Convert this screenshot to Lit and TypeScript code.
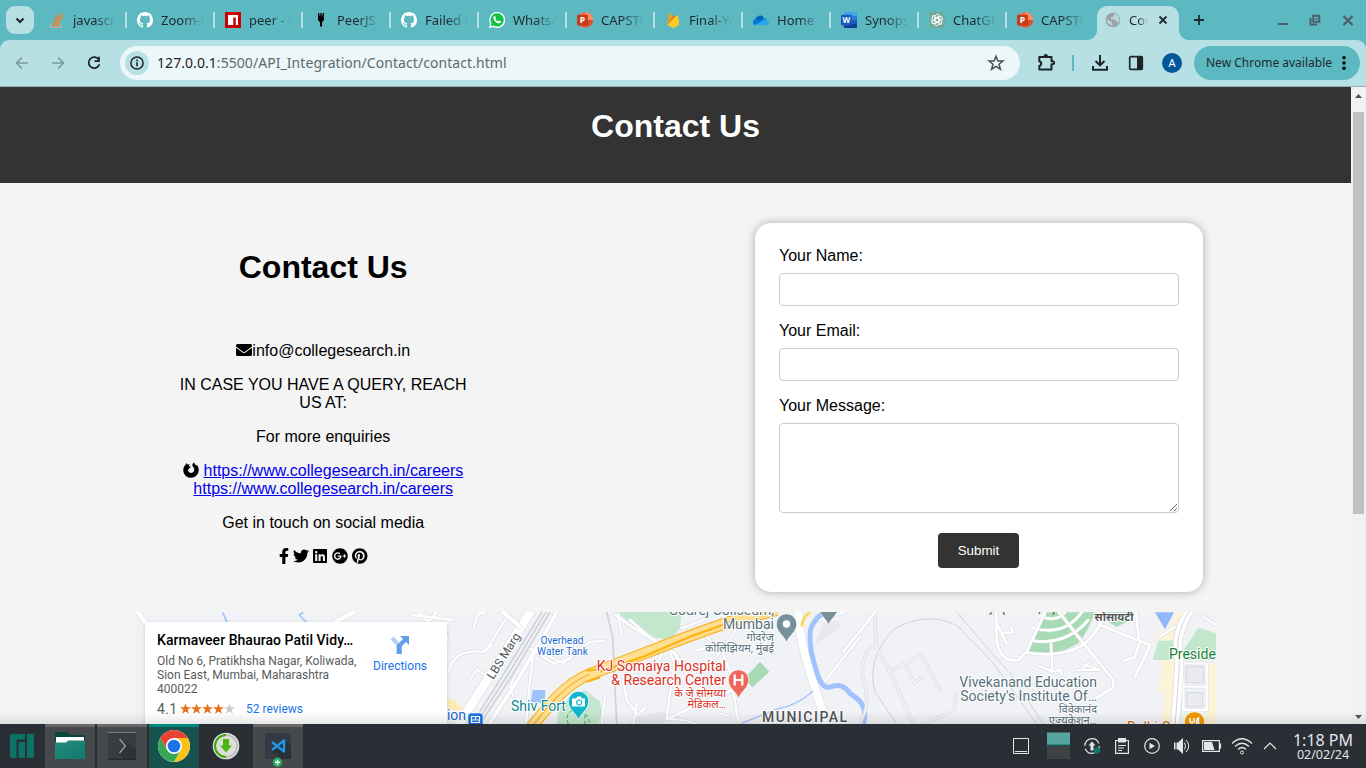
import { LitElement, html, svg, css } from "lit";
import { customElement } from "lit/decorators.js";

const github = svg`<path fill="#fff" d="M8 0C3.58 0 0 3.58 0 8c0 3.54 2.29 6.53 5.47 7.59.4.07.55-.17.55-.38 0-.19-.01-.82-.01-1.49-2.01.37-2.53-.49-2.69-.94-.09-.23-.48-.94-.82-1.13-.28-.15-.68-.52-.01-.53.63-.01 1.08.58 1.23.82.72 1.21 1.87.87 2.33.66.07-.52.28-.87.51-1.07-1.78-.2-3.64-.89-3.64-3.95 0-.87.31-1.59.82-2.15-.08-.2-.36-1.02.08-2.12 0 0 .67-.21 2.2.82.64-.18 1.32-.27 2-.27s1.36.09 2 .27c1.53-1.04 2.2-.82 2.2-.82.44 1.1.16 1.92.08 2.12.51.56.82 1.27.82 2.15 0 3.07-1.87 3.75-3.65 3.95.29.25.54.73.54 1.48 0 1.07-.01 1.93-.01 2.2 0 .21.15.46.55.38A8.01 8.01 0 0 0 16 8c0-4.42-3.58-8-8-8z"/>`;

const powerpoint = svg`
  <circle cx="8.4" cy="8" r="7.9" fill="#ed6c47"/>
  <path d="M8.4.1a7.9 7.9 0 0 1 7.6 7.9H8.4z" fill="#ff8f6b"/>
  <path d="M.6 8h15.7a7.9 7.9 0 0 1-15.7 0z" fill="#d35230"/>
  <rect x="0" y="2.8" width="11" height="10.8" rx="1" fill="#c43e1c"/>
  <text x="5.5" y="11.2" class="glyph" font-size="8.6">P</text>`;

const icons = {
  stack: svg`
    <path d="M1.5 11v4.300h10.500v-4.300" fill="none" stroke="#b9aea6" stroke-width="1.300"/>
    <g stroke="#f48024" stroke-width="1.400" fill="none">
      <path d="M3.500 13.200h6.800M3.600 10.600l6.700.8M4.300 7.900l6.400 2M5.800 5.200l5.600 3.500M8 2.600l4.200 5M11.200.6l1.900 6.200"/>
    </g>`,
  github,
  npm: svg`<rect width="16" height="16" fill="#cb0000"/><path d="M3 3h10v10h-2.200V5.400H8.300V13H3z" fill="#fff"/>`,
  peer: svg`<path d="M5 1h1.300v2.500h1V1h1.400v2.500h1V1H11v3.600L10.200 5.200H11V8L9.700 9.300V10H9v4.500H7V10H6.200V9.300L5 8V5.200h.8L5 4.600z" fill="#000"/>`,
  whatsapp: svg`
    <path d="M0 16l1.200-4.200A8 8 0 1 1 4.200 14.900z" fill="#fff"/>
    <path d="M1.700 14.300l.8-3A6.600 6.600 0 1 1 4.700 13.500z" fill="#10c143"/>
    <path d="M5.200 4.200c.5-.4 1-.2 1.200.3l.5 1.200c.1.400-.3.800-.6 1.200.6 1.200 1.500 2 2.700 2.500.500-.500.700-1 1.200-.9l1.400.7c.5.300.2 1.300-.3 1.700-1 .8-2.400.5-4-.5C5.500 9.100 4.300 7.400 4.300 5.900c0-.7.400-1.300.9-1.700z" fill="#fff"/>`,
  powerpoint,
  firebase: svg`
    <path d="M2 13L4.200.7c.1-.3.400-.3.600 0L7 4.600z" fill="#ffa000"/>
    <path d="M2 13L8.600 3.400c.2-.3.400-.3.600 0l1.200 2.300z" fill="#f57c00"/>
    <path d="M2 13L12.400 3.100c.2-.2.600-.1.700.2L14.300 13 8.800 15.800c-.4.200-.8.200-1.200 0z" fill="#ffca28"/>`,
  onedrive: svg`
    <path d="M2.500 8.200A4.600 4.600 0 0 1 11 5.700l-1 3.300z" fill="#0364b8"/>
    <path d="M0 10.500A3.400 3.400 0 0 1 4.600 7.200l5 3-6.500 2.900C1.200 13.200 0 12 0 10.500z" fill="#0078d4"/>
    <path d="M8.400 9.400l2-3.600c2.800-.1 3.300 1.400 3.400 2.200l-2 2z" fill="#1490df"/>
    <path d="M1.500 12.900L9.500 9l3.300-1.100c2 0 3.200 1.300 3.200 2.800 0 1.400-1 2.500-2.500 2.500H3.500c-.8 0-1.500-.1-2-.3z" fill="#28a8ea"/>`,
  word: svg`
    <rect x="3" y="0" width="13" height="16" rx="1" fill="#2b7cd3"/>
    <path d="M3 0h12q1 0 1 1v3H3z" fill="#41a5ee"/><path d="M3 8h13v4H3z" fill="#185abd"/>
    <path d="M3 12h13v3q0 1-1 1H3z" fill="#103f91"/>
    <rect x="0" y="2.800" width="10.800" height="10.600" rx="1" fill="#185abd"/>
    <text x="5.300" y="11" class="glyph" font-size="8">W</text>`,
  openai: svg`
    <rect width="16" height="16" rx="3" fill="#74aa9c"/>
    <g fill="none" stroke="#fff" stroke-width="1">
      ${[0, 60, 120, 180, 240, 300].map(a => svg`<path transform="rotate(${a} 8 8)" d="M6.200 8.800V4.600c0-2.600 3.800-3 4.500-.5M6.200 6.300l3.600-2"/>`)}
    </g>`,
  globe: svg`
    <circle cx="8" cy="8" r="7.300" fill="#9aa0a6"/>
    <path d="M1.900 6.800l2.500 2.300h2.200v1.700l1 1v1.700C4.500 13.300 2 11 1.900 8zM9 1.900v1.800L7.700 5H6v1.500l-.8.7h3.900l1 1.500h1.400l.9 1.500.7 1.200c2-2.400 1.800-6-.1-8C11.800 2.300 10.500 1.900 9 1.900z" fill="#b7e0e4" opacity=".85"/>`,
};

const tabs: [keyof typeof icons, string][] = [
  ["stack", "javascript"], ["github", "Zoom-Clone"], ["npm", "peer - npm"], ["peer", "PeerJS -"],
  ["github", "Failed to"], ["whatsapp", "WhatsApp"], ["powerpoint", "CAPSTONE"], ["firebase", "Final-Year"],
  ["onedrive", "Home - O"], ["word", "Synopsis"], ["openai", "ChatGPT"], ["powerpoint", "CAPSTONE"],
];

const fa = {
  envelope: [512, "M502.3 190.8c3.9-3.1 9.7-.2 9.7 4.7V400c0 26.5-21.5 48-48 48H48c-26.5 0-48-21.5-48-48V195.6c0-5 5.7-7.8 9.7-4.7 22.4 17.4 52.1 39.5 154.1 113.6 21.1 15.4 56.7 47.8 92.2 47.6 35.7.3 72-32.8 92.3-47.6 102-74.1 131.6-96.3 154-113.7zM256 320c23.2.4 56.6-29.2 73.4-41.4 132.7-96.3 142.8-104.7 173.4-128.7 5.8-4.5 9.2-11.5 9.2-18.9v-19c0-26.5-21.5-48-48-48H48c-26.5 0-48 21.5-48 48v19c0 7.4 3.4 14.3 9.2 18.9 30.6 23.9 40.7 32.4 173.4 128.7 16.8 12.2 50.2 41.8 73.4 41.4z"],
  firefox: [512, "M118 32C122 52 137 72 160 84C180 70 208 62 232 64C206 80 186 104 190 124C205 140 225 144 248 150C246 170 230 182 206 196C198 216 172 216 160 246C162 312 210 350 262 348C330 346 368 290 360 226C352 180 326 150 296 122C298 78 322 30 350 6C358 42 392 76 424 108C438 112 442 102 439 89C482 126 502 190 502 262C497 397 391 500 256 504C118 503 12 397 8 260C10 179 39 122 81 86C91 60 103 43 118 32z"],
  facebook: [320, "M279.14 288l14.22-92.66h-88.91v-60.13c0-25.35 12.42-50.06 52.24-50.06h40.42V6.26S260.43 0 225.36 0c-73.22 0-121.08 44.38-121.08 124.72v70.62H22.89V288h81.39v224h100.17V288z"],
  twitter: [512, "M459.37 151.716c.325 4.548.325 9.097.325 13.645 0 138.72-105.583 298.558-298.558 298.558-59.452 0-114.68-17.219-161.137-47.106 8.447.974 16.568 1.299 25.34 1.299 49.055 0 94.213-16.568 130.274-44.832-46.132-.975-84.792-31.188-98.112-72.772 6.498.974 12.995 1.624 19.818 1.624 9.421 0 18.843-1.3 27.614-3.573-48.081-9.747-84.143-51.98-84.143-102.985v-1.299c13.969 7.797 30.214 12.67 47.431 13.319-28.264-18.843-46.781-51.005-46.781-87.391 0-19.492 5.197-37.36 14.294-52.954 51.655 63.675 129.3 105.258 216.365 109.807-1.624-7.797-2.599-15.918-2.599-24.04 0-57.828 46.782-104.934 104.934-104.934 30.213 0 57.502 12.67 76.67 33.137 23.715-4.548 46.456-13.32 66.599-25.34-7.798 24.366-24.366 44.833-46.132 57.827 21.117-2.273 41.584-8.122 60.426-16.243-14.292 20.791-32.161 39.308-52.628 54.253z"],
  linkedin: [448, "M416 32H31.9C14.3 32 0 46.5 0 64.3v383.4C0 465.5 14.3 480 31.9 480H416c17.6 0 32-14.5 32-32.3V64.3c0-17.8-14.4-32.3-32-32.3zM135.4 416H69V202.2h66.5V416zm-33.2-243c-21.3 0-38.5-17.3-38.5-38.5S80.9 96 102.2 96c21.2 0 38.5 17.3 38.5 38.5 0 21.3-17.2 38.5-38.5 38.5zm282.1 243h-66.4V312c0-24.8-.5-56.7-34.5-56.7-34.6 0-39.9 27-39.9 54.9V416h-66.4V202.2h63.7v29.2h.9c8.9-16.8 30.6-34.5 62.9-34.5 67.2 0 79.7 44.3 79.7 101.9V416z"],
  gplus: [512, "M256 8C119.1 8 8 119.1 8 256s111.1 248 248 248 248-111.1 248-248S392.9 8 256 8zm-70.7 372c-68.8 0-124-55.5-124-124s55.2-124 124-124c31.3 0 60.1 11 83 32.3l-33.6 32.6c-13.2-12.9-31.3-19.1-49.4-19.1-42.9 0-77.2 35.5-77.2 78.1s34.2 78.1 77.2 78.1c32.6 0 64.9-19.1 70.1-53.3h-70.1v-42.6h116.9c1.3 6.8 1.9 13.6 1.9 20.7 0 70.8-47.5 121.2-118.8 121.2zm230.2-106.2v35.5H380v-35.5h-35.5v-35.5H380v-35.5h35.5v35.5h35.2v35.5h-35.2z"],
  pinterest: [496, "M496 256c0 137-111 248-248 248-25.6 0-50.2-3.9-73.4-11.1 10.1-16.5 25.2-43.5 30.8-65 3-11.6 15.4-59 15.4-59 8.1 15.4 31.7 28.5 56.8 28.5 74.8 0 128.7-68.8 128.7-154.3 0-81.9-66.9-143.2-152.9-143.2-107 0-163.9 71.8-163.9 150.1 0 36.4 19.4 81.7 50.3 96.1 4.7 2.2 7.2 1.2 8.3-3.3.8-3.4 5-20.3 6.9-28.1.6-2.5.3-4.7-1.7-7.1-10.1-12.5-18.3-35.3-18.3-56.6 0-54.7 41.4-107.6 112-107.6 60.9 0 103.6 41.5 103.6 100.9 0 67.1-33.9 113.6-78 113.6-24.3 0-42.6-20.1-36.7-44.8 7-29.5 20.5-61.3 20.5-82.6 0-19-10.2-34.9-31.4-34.9-24.9 0-44.9 25.7-44.9 60.2 0 22 7.4 36.8 7.4 36.8s-24.5 103.8-29 123.2c-5 21.4-3 51.6-.9 71.2C65.4 450.9 0 361.1 0 256 0 119 111 8 248 8s248 111 248 248z"],
} as const;

const faIcon = (name: keyof typeof fa) =>
  html`<svg class="fa" height="16" width=${fa[name][0] / 32} viewBox="0 0 ${fa[name][0]} 512"><path d=${fa[name][1]} /></svg>`;

const ic = (size: number, body: unknown) =>
  html`<svg width=${size} height=${size} viewBox="0 0 ${size} ${size}">${body}</svg>`;

@customElement("city-map")
class CityMap extends LitElement {
  static styles = css`
    :host { display: block; position: relative; height: 112px; overflow: hidden; font-family: Roboto, "Noto Sans", sans-serif; }
    .canvas { display: block; }
    .case { fill: none; stroke: #dcdfe4; stroke-linecap: round; stroke-linejoin: round; }
    .road { fill: none; stroke: #fff; stroke-linecap: round; stroke-linejoin: round; }
    .lane { fill: none; stroke: #f4f5f7; stroke-linecap: round; stroke-linejoin: round; }
    .rail { fill: none; stroke: #d0d2d6; stroke-linejoin: round; }
    .water { fill: none; stroke: #a0c3ff; stroke-linejoin: round; }
    text { font-size: 14px; paint-order: stroke; stroke: #fff; stroke-width: 2px; stroke-linejoin: round; }
    .end { text-anchor: end; }
    .mid { text-anchor: middle; }
    .hi { font-size: 11px; }
    .ten { font-size: 10.2px; }
    .twelve { font-size: 12px; }
    .slate { fill: #56707c; }
    .red { fill: #d93025; }
    .blue { fill: #1967d2; }
    .teal { fill: #12868f; }
    .gray { fill: #505458; }
    .green { fill: #188038; }
    .orange { fill: #d56e0c; }
    .place { position: absolute; left: 10px; top: 10px; width: 302px; height: 110px; box-sizing: border-box; padding: 10px 0 0 12px; display: flex; background: #fff; border-radius: 2px; box-shadow: 0 1px 4px -1px rgba(0,0,0,.3); font-size: 12px; line-height: 14px; color: #5b5b5b; }
    .info { width: 204px; flex: none; }
    .name { font-size: 14px; font-weight: 500; color: #000; line-height: 16px; margin-bottom: 6px; white-space: nowrap; letter-spacing: .04px; }
    .rating { display: flex; align-items: center; margin-top: 5px; height: 16px; }
    .score { font-size: 14px; width: 23px; letter-spacing: .3px; }
    .link { color: #1a73e8; }
    .reviews { margin-left: 11px; }
    .dir { width: 78px; flex: none; display: flex; flex-direction: column; align-items: center; gap: 4px; padding-top: 3px; }
  `;

  render() {
    const left = [
      ["M20 30L50 75", 13], ["M615 66L670 37", 13], ["M850 45L970 60M865 37L895 65M895 65L920 37", 7],
      ["M1030 85L1045 40L1068 40", 7], ["M955 215C970 160 1010 150 1060 155L1085 135", 7],
      ["M1020 240L1040 208L1065 225", 6], ["M945 90L955 130", 6],
      ["M1065 155L1140 37", 7], ["M985 375L1205 30", 26],
    ];
    const centre = [
      ["M20 20L90 80", 12], ["M200 36L160 110L70 260L-20 400", 10],
      ["M210 110L260 130L240 175M160 160L220 190L300 125L345 122M250 150L285 95", 6],
      ["M120 145L190 190L240 175M130 160L120 240L108 372", 7],
      ["M75 225L60 260L70 290", 6],
      ["M375 45L440 90L500 125L555 160L590 220", 8], ["M575 85L640 60M420 60L500 130", 7],
      ["M400 240L410 300L440 340M440 310L430 372M520 150L500 200", 7], ["M540 160L555 190L540 280L530 355L590 362L620 372", 7],
      ["M530 358L610 320L750 260L765 240M620 150L690 140L720 215L745 365M650 110L690 150", 7],
      ["M345 290L335 372", 6], ["M690 340L720 350", 6], ["M385 40L395 110", 6],
      ["M925 35C925 120 960 220 1010 372", 24], ["M1000 250L1110 110M985 60L1060 37", 7],
      ["M460 325L440 350L470 320", 5], ["M680 170L760 60", 5],
    ];
    const right = [
      ["M-20 155L75 37", 8], ["M530 158C640 175 720 150 755 60L750 37", 8],
      ["M438 37L440 120C450 180 480 185 505 180L530 155L585 37M440 70L470 130M462 98L490 98L482 80M400 50L403 40", 8],
      ["M628 37L700 130L790 240L790 262L730 300", 8], ["M603 130L607 215L560 195M607 215L635 210L635 225", 7],
      ["M690 190L750 210L680 210M700 205L720 185", 6], ["M750 75L900 135L885 170L855 230M858 37L868 130L855 170L820 183", 8],
      ["M505 230L560 270", 6], ["M930 110L975 80M1060 50L1100 75", 7], ["M1000 180L1000 330L1070 330L1070 190L1000 190M1000 260L1070 260", 7],
    ];
    const faint = "M75 40L78 140L120 215L190 372M78 142C50 130 30 190 40 240C60 290 50 330 30 372M115 215L215 165L270 270M165 190L192 250L215 232M320 280L312 330L225 372";
    const draw = (list: (string | number)[][]) => svg`
      ${list.map(([d, w]) => svg`<path class="case" d=${d} stroke-width=${(w as number) + 4}/>`)}
      ${list.map(([d, w]) => svg`<path class="road" d=${d} stroke-width=${w}/>`)}`;
    const pin = (x: number, y: number, c: string, inner: unknown) => svg`
      <g transform="translate(${x} ${y})">
        <path d="M0 18.500C-2 12-10.300 8-10.300 0A10.300 10.300 0 0 1 10.300 0C10.300 8 2 12 0 18.500z" fill=${c} stroke="#fff" stroke-width=".8"/>${inner}
      </g>`;

    return html`
      <svg class="canvas" width="1081" height="112" viewBox="135 612 1081 112">
        <rect x="135" y="612" width="1081" height="112" fill="#f1f2f5"/>
        <g transform="translate(850 600) scale(.33333)">
          <path fill="#fdf3d6" d="M985 36L1010 36L980 110L990 372L935 372L945 280L928 275L945 100zM1070 200L1100 190V372H1060L1080 300zM915 105l20-10 10 15-20 15z"/>
          <path fill="#c3e7cd" d="M925 122H975L962 180H908zM1000 150L1045 83L1100 100V180H1000z"/>
          <path fill="#a8dab5" d="M585 37H735L715 85L690 125C650 155 600 165 530 157zM755 37H842L832 65L800 80L765 60z"/>
          <path class="road" stroke-width="9" d="M540 120C600 135 670 115 715 60M552 85C610 100 660 85 695 37M570 50C610 62 630 55 645 37"/>
        </g>
        <g transform="translate(490 600) scale(.33333)">
          <path fill="#c3e7cd" d="M375 36H575L570 85L540 122L495 112zM205 325L245 290L285 270L330 305L337 345L325 372H200z"/>
          <path fill="#a8dab5" d="M762 237L810 185L838 215L788 262z"/>
          <path fill="#9fc3fc" d="M128 270H166L164 308H122z"/>
          <path fill="#e7e9ed" d="M1000 70L1045 60L1055 80L970 140zM430 355L530 330L520 372H420z"/>
        </g>
        <g transform="translate(130 600) scale(.33333)">
          <path fill="#fdeab8" d="M950 295L975 300L1000 330L950 330z"/>
          ${draw(left)}
          <path class="water" stroke-width="5" d="M278 37L292 70M520 37L508 45L532 70"/>
        </g>
        <g transform="translate(490 600) scale(.33333)">
          <path class="rail" stroke-width="5" d="M350 36L368 110L380 372"/>
          ${draw(centre)}
          <path class="rail" stroke-width="5" d="M156 36L42 220L-54 372M168 36L55 222L-42 372M180 36L67 225L-30 372"/>
          <path class="water" stroke-width="15" d="M1003 36C955 70 955 100 965 160C980 220 990 262 1015 262C1040 255 1060 250 1080 280C1110 300 1135 320 1120 372"/>
          <path class="water" stroke-width="4" d="M970 272C940 300 900 320 860 327L755 370"/>
          <path d="M935 80Q938 50 960 37" fill="none" stroke="#fdd663" stroke-width="9"/>
          <path d="M118 390C180 310 230 250 300 222C420 180 580 110 720 66L860 30" fill="none" stroke="#f9b22a" stroke-width="36"/>
          <path d="M118 390C180 310 230 250 300 222C420 180 580 110 720 66L860 30" fill="none" stroke="#ffe092" stroke-width="29"/>
          <path d="M118 390C180 310 230 250 300 222" fill="none" stroke="#f9b22a" stroke-width="4"/>
          <path d="M290 212L320 208M290 245L330 232M330 215L460 170L600 110L740 60" fill="none" stroke="#fcb419" stroke-width="7"/>
          <path d="M235 372C215 320 290 310 300 372M285 345V372" fill="none" stroke="#49a76a" stroke-width="3" stroke-dasharray="11 7"/>
        </g>
        <g transform="translate(850 600) scale(.33333)">
          <path class="rail" stroke-width="3" d="M140 372L75 275C50 190 100 120 130 90C190 50 290 40 340 95L430 190L560 372M320 36L400 130L480 220L580 372"/>
          <path class="case" stroke-width="10" d=${faint}/><path class="lane" stroke-width="4.500" d=${faint}/>
          ${draw(right)}
          <path class="case" stroke-width="30" d="M1020 30C970 110 985 150 988 200L975 380"/>
          <path class="road" stroke-width="25" d="M1020 30C970 110 985 150 988 200L975 380"/>
          <path class="rail" stroke-width="3" d="M1020 30C970 110 985 150 988 200L975 380"/>
          <path fill="#e9ebee" stroke="#d5d8dc" stroke-width="3" d="M1008 200h52v48h-52zM1010 278h48v42h-48z"/>
          <path fill="#8fb7fa" d="M915 37H972L945 88z"/>
          <path d="M426 37q-3 5-8 5M462 36q-4 5 3 8M570 36q-2 5-4 6M612 36q0 6-4 8" fill="none" stroke="#5b7480" stroke-width="4"/>
        </g>

        <text class="mid blue ten" x="562" y="643.500">Overhead</text>
        <text class="mid blue ten" x="562.500" y="654.500">Water Tank</text>
        <text class="mid gray twelve" transform="translate(507 658) rotate(-58)">LBS Marg</text>
        <text class="end slate" x="774" y="615">Godrej Coliseum,</text>
        <text class="end slate" x="774" y="629">Mumbai</text>
        <text class="end slate hi" x="774" y="640.500">गोदरेज</text>
        <text class="end slate hi" x="774" y="651.500">कोलिझियम, मुंबई</text>
        <text class="end red" x="726" y="671">KJ Somaiya Hospital</text>
        <text class="end red" x="726" y="685">&amp; Research Center</text>
        <text class="end red hi" x="726" y="696.500">के जे सोमय्या</text>
        <text class="end red hi" x="726" y="708">मेडिकल…</text>
        <text class="teal" x="511" y="711">Shiv Fort</text>
        <text class="gray" x="762" y="722" font-weight="500" letter-spacing="1.500">MUNICIPAL</text>
        <text class="end blue" x="466" y="719.500">Sion</text>
        <text class="end slate" x="1097" y="687">Vivekanand Education</text>
        <text class="end slate" x="1097" y="701">Society's Institute Of…</text>
        <text class="end slate hi" x="1097" y="712.500">विवेकानंद</text>
        <text class="end slate hi" x="1097" y="724">एज्यकेशन…</text>
        <text class="mid gray hi" x="1114" y="620.500" font-weight="700">सोसायटी</text>
        <text class="green" x="1169" y="659">President</text>
        <text class="orange" x="1127" y="732">Delhi C</text>

        ${pin(786.500, 624, "#78909c", svg`<circle r="3.700" fill="#fff"/>`)}
        ${pin(828.500, 606.500, "#78909c", "")}
        ${pin(738.500, 680, "#ee675c", svg`<path d="M-3.800-5.500V5.500M3.800-5.500V5.500M-3.800 0H3.800" stroke="#fff" stroke-width="2.200"/>`)}
        ${pin(578.500, 701.500, "#12b5cb", svg`<path d="M-6.500-3H-2.500L-1-5H2.500L3.500-3H6.500V5H-6.500z" fill="#fff"/><circle cx=".7" cy="1" r="2.500" fill="none" stroke="#12b5cb" stroke-width="1.200"/>`)}
        ${pin(1194.500, 722, "#f29900", svg`<path d="M-4.500-4V0H-.5V-4M-2.500 0V5M4 5V-4Q1.500-3 2 1H4" fill="none" stroke="#fff" stroke-width="1.600"/>`)}
        <rect x="468" y="713" width="15" height="14" rx="3" fill="#1a73e8" stroke="#fff" stroke-width=".6"/>
        <path d="M471.500 716.500h8v6h-8zM475.500 716.500v3.500M471.500 720h8" fill="none" stroke="#fff" stroke-width="1.200"/>
      </svg>
      <div class="place">
        <div class="info">
          <div class="name">Karmaveer Bhaurao Patil Vidy…</div>
          <div>Old No 6, Pratikhsha Nagar, Koliwada,<br />Sion East, Mumbai, Maharashtra<br />400022</div>
          <div class="rating">
            <span class="score">4.1</span>
            <svg width="55" height="12" viewBox="0 0 55 12">
              ${[0, 1, 2, 3, 4].map(i => svg`<path transform="translate(${i * 11} 0)" fill=${i < 4 ? "#e7711b" : "#ccc"} d="M5.500.4L6.900 4.300H11L7.700 6.800L8.900 10.800L5.500 8.400L2.100 10.800L3.300 6.800L0 4.300H4.100z"/>`)}
            </svg>
            <span class="link reviews">52 reviews</span>
          </div>
        </div>
        <div class="dir">
          <svg width="22" height="20" viewBox="0 0 22 20">
            <path d="M1.500 4.500L4.500 1.500L11.500 9L9 12z" fill="#b5d0f8"/>
            <path d="M11 1H20V10L17 7L12.800 11.200V19H7.600V10.500L14 4z" fill="#619fe8"/>
          </svg>
          <span class="link">Directions</span>
        </div>
      </div>`;
  }
}

@customElement("app-root")
class AppRoot extends LitElement {
  static styles = css`
    :host { display: flex; flex-direction: column; width: 1366px; height: 768px; overflow: hidden; font-family: "Noto Sans", sans-serif; background: #5cb8c1; }
    * { box-sizing: border-box; }
    svg { display: block; flex: none; }
    .glyph { fill: #fff; font-family: "Open Sans", sans-serif; font-weight: 700; text-anchor: middle; }

    .tabstrip { height: 40px; display: flex; align-items: center; color: #1f2a2c; font-size: 13px; }
    .search { width: 28px; height: 28px; margin: 0 5px 0 6px; border-radius: 9px; background: #b7e0e4; display: grid; place-items: center; }
    .tab { width: 88px; height: 16px; padding-left: 10px; display: flex; align-items: center; gap: 8px; border-right: 2px solid #b7e0e4; }
    .tab.last { border-color: transparent; }
    .title { width: 43px; overflow: hidden; white-space: nowrap; line-height: 20px; mask-image: linear-gradient(90deg, #000 50%, transparent); }
    .active { position: relative; width: 82px; height: 34px; margin: 6px 0 0 2px; padding: 0 0 6px 8px; border-radius: 10px 10px 0 0; background: #b7e0e4; display: flex; align-items: center; gap: 8px; }
    .active::before, .active::after { content: ""; position: absolute; bottom: 0; width: 10px; height: 10px; }
    .active::before { left: -10px; background: radial-gradient(circle at 0 0, transparent 9.5px, #b7e0e4 10.5px); }
    .active::after { right: -10px; background: radial-gradient(circle at 100% 0, transparent 9.5px, #b7e0e4 10.5px); }
    .active .title { width: 19px; }
    .close { margin-left: 1px; }
    .plus { margin-left: 12px; }
    .wins { display: flex; gap: 16px; margin-left: auto; padding-right: 10px; }

    .toolbar { height: 47px; padding: 0 6px 1px 4px; display: flex; align-items: center; background: #b7e0e4; border-bottom: 1px solid #8fb1b5; border-radius: 9px 9px 0 0; }
    .btn { width: 36px; height: 36px; display: grid; place-items: center; }
    .omni { width: 900px; height: 34px; margin: 0 8px; padding: 0 15px 0 5px; border-radius: 17px; background: #ebf7f8; display: flex; align-items: center; font-size: 14px; letter-spacing: .06px; color: #5f6a6c; }
    .host { color: #1f2224; }
    .site { width: 24px; height: 24px; border-radius: 50%; background: #b7e0e4; display: grid; place-items: center; margin-right: 8px; }
    .star { margin-left: auto; }
    .bar { width: 2px; height: 16px; margin: 0 8px; background: #5cb8c1; }
    .avatar { width: 20px; height: 20px; border-radius: 50%; background: #00579c; color: #fff; font-size: 11px; line-height: 20px; text-align: center; }
    .pill { width: 166px; height: 34px; margin-left: 4px; padding: 0 10px 0 12px; border-radius: 17px; background: #5cb8c1; display: flex; align-items: center; justify-content: space-between; font-size: 12px; color: #1f2a2c; white-space: nowrap; }

    .view { height: 637px; display: flex; }
    .page { width: 1351px; height: 637px; overflow: hidden; background: #f4f4f4; color: #000; font: 16px "Liberation Sans", Arial, sans-serif; line-height: 18px; }
    .banner { height: 96px; padding-top: 21px; background: #333; color: #fff; text-align: center; }
    h1 { margin: 0; font-size: 32px; line-height: 37px; }
    .cols { display: flex; align-items: flex-start; padding: 40px 0 0 173px; }
    .contact { width: 300.4px; padding-top: 26px; text-align: center; }
    .contact h1 { margin-bottom: 56px; }
    .contact p { margin: 0 0 16px; }
    .contact a { color: #0000ee; text-decoration: underline; }
    .fa { display: inline-block; vertical-align: -2px; fill: #000; }
    .card { width: 448px; height: 369px; margin-left: 281.6px; padding: 24px; border-radius: 16px; background: #fff; box-shadow: 0 0 10px rgba(0,0,0,.3); display: flex; flex-direction: column; }
    label { margin-bottom: 8px; }
    input, textarea { margin: 0 0 16px; padding: 8px; width: 400px; border: 1px solid #ccc; border-radius: 4px; background: #fff; outline: none; }
    input { height: 33px; }
    textarea { height: 90px; margin-bottom: 20px; }
    .submit { width: 81px; height: 35px; padding: 0; margin-right: 1px; align-self: center; border: 0; border-radius: 4px; background: #333; color: #fff; font: 13.333px "Liberation Sans", Arial, sans-serif; }
    city-map { width: 1081px; margin: 20px 0 0 135px; }
    .scroll { width: 15px; display: flex; flex-direction: column; align-items: center; background: #f1f1f1; padding: 7px 0 5px; }
    .thumb { width: 11px; height: 402px; margin: 14px 0 auto; background: #c1c1c1; }

    .panel { position: relative; height: 44px; display: flex; background: #2a2e35; color: #e4e6e8; }
    .panel::before { content: ""; position: absolute; left: 0; right: 0; bottom: 100%; height: 12px; background: linear-gradient(transparent, rgba(0,0,0,.09)); }
    .menu { width: 45px; display: grid; place-items: center; padding-right: 1px; }
    .task { width: 50px; margin-right: 2px; border-top: 3px solid transparent; display: flex; justify-content: center; }
    .open { background: #45494c; border-color: #66696c; }
    .current { background: #17524f; border-color: #00887a; }
    .tray { display: flex; margin-left: auto; }
    .cell { width: 30px; display: grid; place-items: center; }
    .cell.wide { width: 23px; margin: 0 7px 0 11px; }
    .cell.slim { width: 26px; }
    .clock { width: 80px; margin-right: 3px; padding-top: 7px; display: flex; flex-direction: column; align-items: center; font-size: 16px; line-height: 18px; }
    .date { font-size: 12.5px; line-height: 12px; }
  `;

  render() {
    return html`
      <div class="tabstrip">
        <div class="search">${ic(12, svg`<path d="M2.500 4.500L6 8L9.500 4.500" fill="none" stroke="#1b2426" stroke-width="2"/>`)}</div>
        ${tabs.map(([i, t], n) => html`<div class="tab ${n === 11 ? "last" : ""}">${ic(16, icons[i])}<span class="title">${t}</span></div>`)}
        <div class="active">${ic(16, icons.globe)}<span class="title">Con</span>
          <span class="close">${ic(12, svg`<path d="M2.500 2.500L9.500 9.500M9.500 2.500L2.500 9.500" stroke="#1f2a2c" stroke-width="1.800"/>`)}</span>
        </div>
        <div class="plus">${ic(16, svg`<path d="M8 3V13M3 8H13" stroke="#1f2a2c" stroke-width="1.800"/>`)}</div>
        <div class="wins">
          ${ic(16, svg`<path d="M3 12H13" stroke="#4a6065" stroke-width="2"/>`)}
          ${ic(16, svg`<path d="M6.200 3.700H12.300V9.800H6.200zM3.500 6V12.500H10" fill="none" stroke="#4a6065" stroke-width="1.900"/><path d="M8.500 6h2v1.700h-2z" fill="#4a6065"/>`)}
          ${ic(17, svg`<path d="M4.500 4L13.500 13M13.500 4L4.500 13" stroke="#4a6065" stroke-width="2.300"/>`)}
        </div>
      </div>

      <div class="toolbar">
        <div class="btn">${ic(16, svg`<path d="M14 8H3M8 2.500L2.500 8L8 13.500" fill="none" stroke="#7d9a9e" stroke-width="1.700"/>`)}</div>
        <div class="btn">${ic(16, svg`<path d="M2 8H13M8 2.500L13.500 8L8 13.500" fill="none" stroke="#7d9a9e" stroke-width="1.700"/>`)}</div>
        <div class="btn">${ic(16, svg`<path d="M13 5A5.500 5.500 0 1 0 13.400 9.300" fill="none" stroke="#1f2426" stroke-width="1.800"/><path d="M13.800 1.800V7H8.600V5.200H12V1.800z" fill="#1f2426"/>`)}</div>
        <div class="omni">
          <span class="site">${ic(16, svg`<circle cx="8" cy="8" r="6.100" fill="none" stroke="#1f2426" stroke-width="1.500"/><path d="M8 7.300V11.300M8 4.600V6.200" stroke="#1f2426" stroke-width="1.600"/>`)}</span>
          <span><span class="host">127.0.0.1</span>:5500/API_Integration/Contact/contact.html</span>
          <span class="star">${ic(18, svg`<path d="M9 2.200L10.900 7H15.900L12 10.200L13.400 15.200L9 12.300L4.600 15.200L6 10.200L2.100 7H7.100z" fill="none" stroke="#4b5254" stroke-width="1.500"/>`)}</span>
        </div>
        <div class="btn">${ic(20, svg`<path d="M4 4H15.500V8.300H16.600A1.500 1.500 0 0 1 16.600 11.300H15.500V16.500H3.300V12.900A2.400 2.400 0 0 0 3.300 8.200V4z" fill="none" stroke="#1f2426" stroke-width="2" stroke-linejoin="round"/><path d="M7.600 3.300a2.200 2.200 0 0 1 4.400 0z" fill="#1f2426"/>`)}</div>
        <div class="bar"></div>
        <div class="btn">${ic(20, svg`<path d="M10 2V12M5.500 8L10 12.300L14.500 8M3 13V16.800H17V13" fill="none" stroke="#1f2426" stroke-width="2"/>`)}</div>
        <div class="btn">${ic(18, svg`<rect x="2.700" y="2.700" width="12.600" height="12.600" rx="1" fill="none" stroke="#1f2426" stroke-width="1.700"/><path d="M10 2.500H15.500V15.500H10z" fill="#1f2426"/>`)}</div>
        <div class="btn"><div class="avatar">A</div></div>
        <div class="pill">New Chrome available
          <svg width="12" height="16" viewBox="0 0 12 16"><circle cx="6" cy="2.800" r="1.700"/><circle cx="6" cy="8" r="1.700"/><circle cx="6" cy="13.200" r="1.700"/></svg>
        </div>
      </div>

      <div class="view">
        <div class="page">
          <div class="banner"><h1>Contact Us</h1></div>
          <div class="cols">
            <div class="contact">
              <h1>Contact Us</h1>
              <p>${faIcon("envelope")}info@collegesearch.in</p>
              <p>IN CASE YOU HAVE A QUERY, REACH US AT:</p>
              <p>For more enquiries</p>
              <p>${faIcon("firefox")} <a>https://www.collegesearch.in/careers</a> <a>https://www.collegesearch.in/careers</a></p>
              <p>Get in touch on social media</p>
              <p>${faIcon("facebook")} ${faIcon("twitter")} ${faIcon("linkedin")} ${faIcon("gplus")} ${faIcon("pinterest")}</p>
            </div>
            <form class="card">
              <label>Your Name:</label><input />
              <label>Your Email:</label><input />
              <label>Your Message:</label><textarea></textarea>
              <button class="submit" type="button">Submit</button>
            </form>
          </div>
          <city-map></city-map>
        </div>
        <div class="scroll">
          <svg width="7" height="4" viewBox="0 0 7 4"><path d="M0 4L3.500 0L7 4z" fill="#505050"/></svg>
          <div class="thumb"></div>
          <svg width="7" height="4" viewBox="0 0 7 4"><path d="M0 0H7L3.500 4z" fill="#505050"/></svg>
        </div>
      </div>

      <div class="panel">
        <div class="menu">${ic(24, svg`<path d="M2 0H15V5.500H6.500V24H2Q0 24 0 22V2Q0 0 2 0zM8.500 8H15V24H8.500zM17 0H24V22Q24 24 22 24H17z" fill="#0b7266"/>`)}</div>
        <div class="task open">
          <svg width="32" height="38" viewBox="0 0 32 38">
            <defs><linearGradient id="f" x1="0" y1="0" x2="1" y2="1"><stop offset="0" stop-color="#2b8b80"/><stop offset="1" stop-color="#0b7a6c"/></linearGradient></defs>
            <path d="M1 5H14L16 8H31V32H1z" fill="#07473f"/><path d="M2 10H30V16H2z" fill="#fff"/><path d="M1 15.500H12L14 13.500H31V32H1z" fill="url(#f)"/>
          </svg>
        </div>
        <div class="task open">
          <svg width="28" height="38" viewBox="0 0 28 38"><path d="M0 5H28V32H0z" fill="#383d3f"/><path d="M11 12L18 19L11 26L17 32H28V22z" fill="#2f3335"/><path d="M0 5.500H28" stroke="#7b7f81"/><path d="M0 32.300H28" stroke="#1f2224"/><path d="M11.500 12L17.500 19L11.500 26" fill="none" stroke="#9b9fa1" stroke-width="1.300"/></svg>
        </div>
        <div class="task current">
          <svg width="32" height="38" viewBox="0 0 32 38">
            <circle cx="16" cy="19" r="16" fill="#fff"/>
            <path d="M2.144 11A16 16 0 0 1 29.856 11H16L9.072 23z" fill="#ea4335"/>
            <path d="M16 35A16 16 0 0 1 2.144 11L9.072 23H22.928z" fill="#34a853"/>
            <path d="M29.856 11A16 16 0 0 1 16 35L22.928 23L16 11z" fill="#fbc117"/>
            <circle cx="16" cy="19" r="8" fill="#fff"/><circle cx="16" cy="19" r="6.300" fill="#1a73e8"/>
          </svg>
        </div>
        <div class="task">
          <svg width="28" height="38" viewBox="0 0 28 38"><circle cx="14" cy="19" r="13.300" fill="#dcdedc"/><circle cx="14" cy="19" r="11" fill="none" stroke="#b5b8b5" stroke-width="1.500"/><path d="M14 30A11 11 0 0 1 14 8" fill="none" stroke="#43a80c" stroke-width="2"/><path d="M11 12H17V18.500H20L14 25.500L8 18.500H11z" fill="#4fb512"/></svg>
        </div>
        <div class="task open">
          <svg width="28" height="40" viewBox="0 0 28 40"><rect x="1" y="6" width="26" height="26" rx="1" fill="#343a44"/><path d="M20 12L27 19V32H18L8 24z" fill="#2b3038"/><path d="M20 12.500V25.500M20 13.500L8 23M20 24.500L8 15" fill="none" stroke="#2196e3" stroke-width="2.400"/><circle cx="13.500" cy="35.300" r="4.700" fill="#27ae60"/><path d="M13.500 32.800V37.800M11 35.300H16" stroke="#fff" stroke-width="1.400"/></svg>
        </div>
        <div class="tray">
          <div class="cell">${ic(16, svg`<path d="M.5.5H15.500V15.500H.5zM2 13.500H14" fill="none" stroke="#e4e6e8"/>`)}</div>
          <div class="cell wide"><svg width="23" height="28" viewBox="0 0 23 28"><path d="M0 .5H23V13H0z" fill="#56a69f"/><path d="M0 13H23" stroke="#0b7266"/><path d="M0 14H23V27H0z" fill="#3e4244"/></svg></div>
          <div class="cell">${ic(18, svg`<circle cx="9" cy="9" r="7.300" fill="none" stroke="#dfe1e3" stroke-width="1.200" stroke-dasharray="20 3"/><path d="M9 4.500L12.500 8.500H10.500V13.500H7.500V8.500H5.500z" fill="#e4e6e8"/><circle cx="14" cy="13.500" r="3.200" fill="#087a6a"/>`)}</div>
          <div class="cell">${ic(16, svg`<path d="M1.600 2.500H14.400V15.400H1.600z" fill="none" stroke="#e4e6e8" stroke-width="1.200"/><path d="M4 0H12V4.500H4z" fill="#e4e6e8"/><path d="M4 7.500H12M4 10H10M4 12.500H8" stroke="#e4e6e8"/>`)}</div>
          <div class="cell">${ic(16, svg`<circle cx="8" cy="8" r="7.300" fill="none" stroke="#e4e6e8" stroke-width="1.200"/><path d="M5.500 4.800L11 8L5.500 11.200z" fill="#e4e6e8"/>`)}</div>
          <div class="cell">${ic(16, svg`<path d="M0 4.500H1.500V11.500H0zM2.500 4.500H4L9 0V16L4 11.500H2.500z" fill="#e4e6e8"/><path d="M10.500 4.500Q12.500 8 10.500 11.500M12 2Q17.500 8 12 14" fill="none" stroke="#e4e6e8"/>`)}</div>
          <div class="cell"><svg width="20" height="12" viewBox="0 0 20 12"><path d="M.6.6H17.400V11.400H.6zM18.500 3.500V8.500" fill="none" stroke="#e4e6e8" stroke-width="1.200"/><path d="M2 2H10L12.500 10H2z" fill="#e4e6e8"/></svg></div>
          <div class="cell"><svg width="22" height="18" viewBox="0 0 22 18"><path d="M1 6.500Q11-3 21 6.500M4 9.500Q11 3 18 9.500M7 12.500Q11 8.500 15 12.500" fill="none" stroke="#e4e6e8" stroke-width="1.200"/><circle cx="11" cy="15.500" r="1.500" fill="none" stroke="#e4e6e8"/></svg></div>
          <div class="cell slim"><svg width="14" height="8" viewBox="0 0 14 8"><path d="M1 7L7 1L13 7" fill="none" stroke="#e4e6e8" stroke-width="1.200"/></svg></div>
          <div class="clock"><div>1:18 PM</div><div class="date">02/02/24</div></div>
        </div>
      </div>`;
  }
}
